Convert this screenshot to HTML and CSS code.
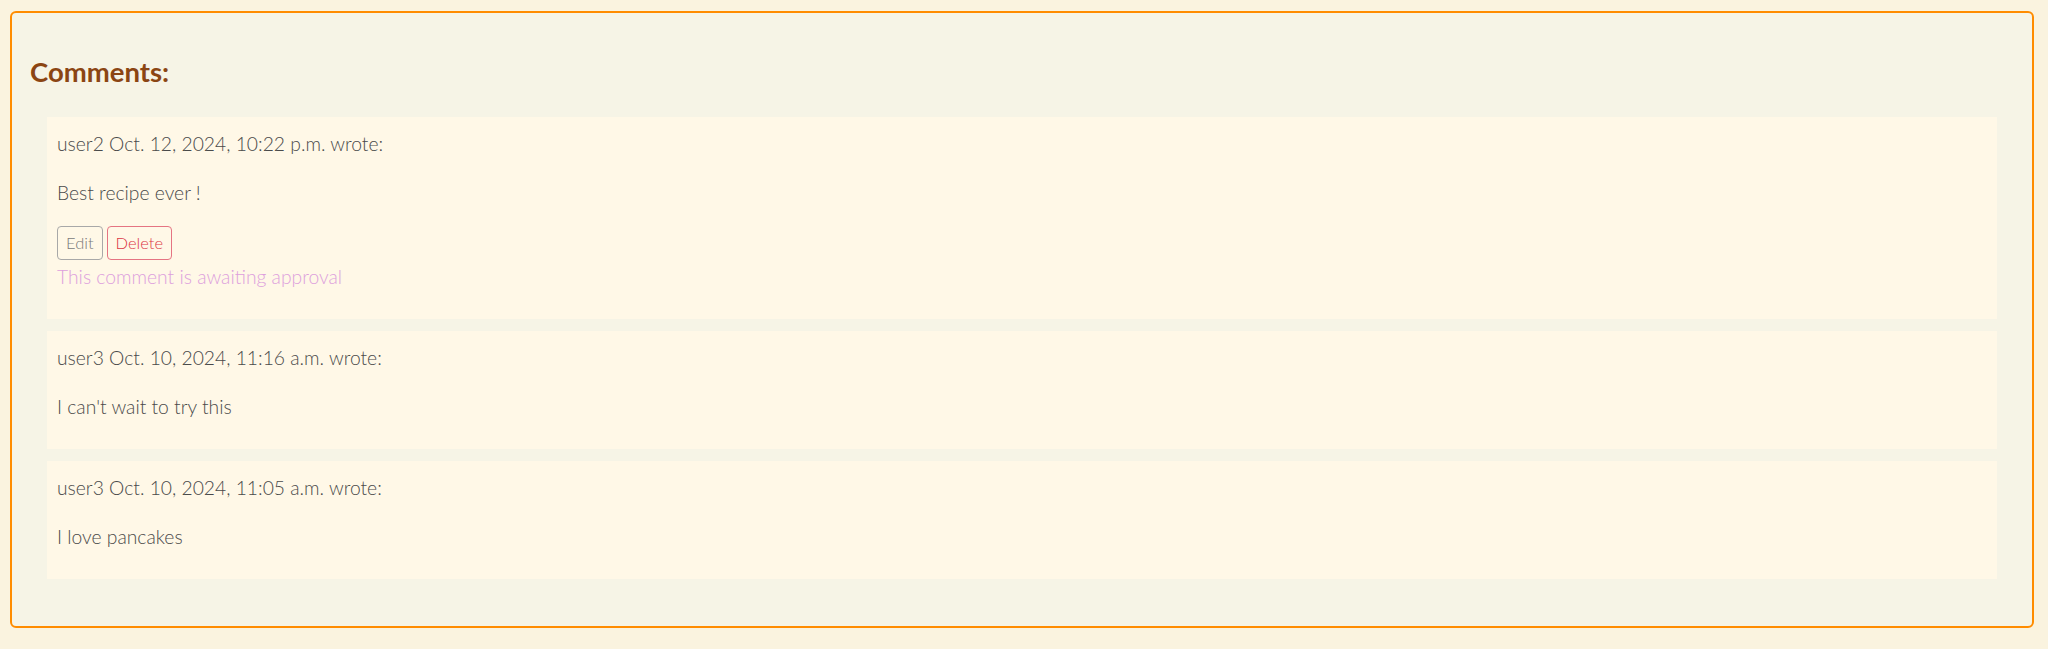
FILE: index.html
```html
<!DOCTYPE html>
<html lang="en">
<head>
<meta charset="utf-8">
<title>Comments</title>
<link rel="stylesheet" href="styles.css">
</head>
<body>
<div class="page">
  <section class="card">
    <h3 class="card-title">Comments:</h3>
    <div class="comments">
      <div class="comment">
        <p class="meta">user2 Oct. 12, 2024, 10:22 p.m. wrote:</p>
        <p class="body body-actions">Best recipe ever !</p>
        <div class="actions">
          <button class="btn btn-edit">Edit</button>
          <button class="btn btn-delete">Delete</button>
        </div>
        <p class="approval">This comment is awaiting approval</p>
      </div>
      <div class="comment">
        <p class="meta">user3 Oct. 10, 2024, 11:16 a.m. wrote:</p>
        <p class="body">I can't wait to try this</p>
      </div>
      <div class="comment">
        <p class="meta">user3 Oct. 10, 2024, 11:05 a.m. wrote:</p>
        <p class="body">I love pancakes</p>
      </div>
    </div>
  </section>
</div>
</body>
</html>
```
FILE: styles.css
```css
* { box-sizing: border-box; }
html, body {
  margin: 0;
  padding: 0;
  background: #faf3df;
  font-family: Lato, "Noto Sans", sans-serif;
}
.page {
  padding: 11px 14px 21px 10px;
}
.card {
  border: 2px solid #ff8c00;
  border-radius: 6px;
  background: #f6f4e6;
  padding: 42px 18px 47px 18px;
}
.card-title {
  margin: 0 0 28px 0;
  font-size: 27.5px;
  line-height: 34px;
  font-weight: 700;
  color: #8b4513;
}
.comments {
  margin: 0 17px;
  display: flex;
  flex-direction: column;
  gap: 12px;
}
.comment {
  background: #fff8e7;
  padding: 13px 10px 29px 10px;
  color: #4a4a4a;
  font-weight: 300;
  font-size: 19.3px;
  line-height: 27px;
}
.comment p { margin: 0; }
.meta { margin-bottom: 22px !important; }
.body-actions { margin-bottom: 20px !important; }
.actions {
  display: flex;
  gap: 4px;
  height: 34px;
}
.btn {
  font-family: Lato, "Noto Sans", sans-serif;
  font-weight: 300;
  font-size: 16.5px;
  line-height: 22px;
  padding: 5px 8px;
  height: 34px;
  background: transparent;
  border-radius: 4px;
  border: 1px solid;
}
.btn-edit {
  color: #7a7a7a;
  border-color: #a8a8a8;
}
.btn-delete {
  color: #dc3545;
  border-color: #e57482;
}
.approval {
  margin-top: 3px !important;
  color: #dda0dd;
}
```
